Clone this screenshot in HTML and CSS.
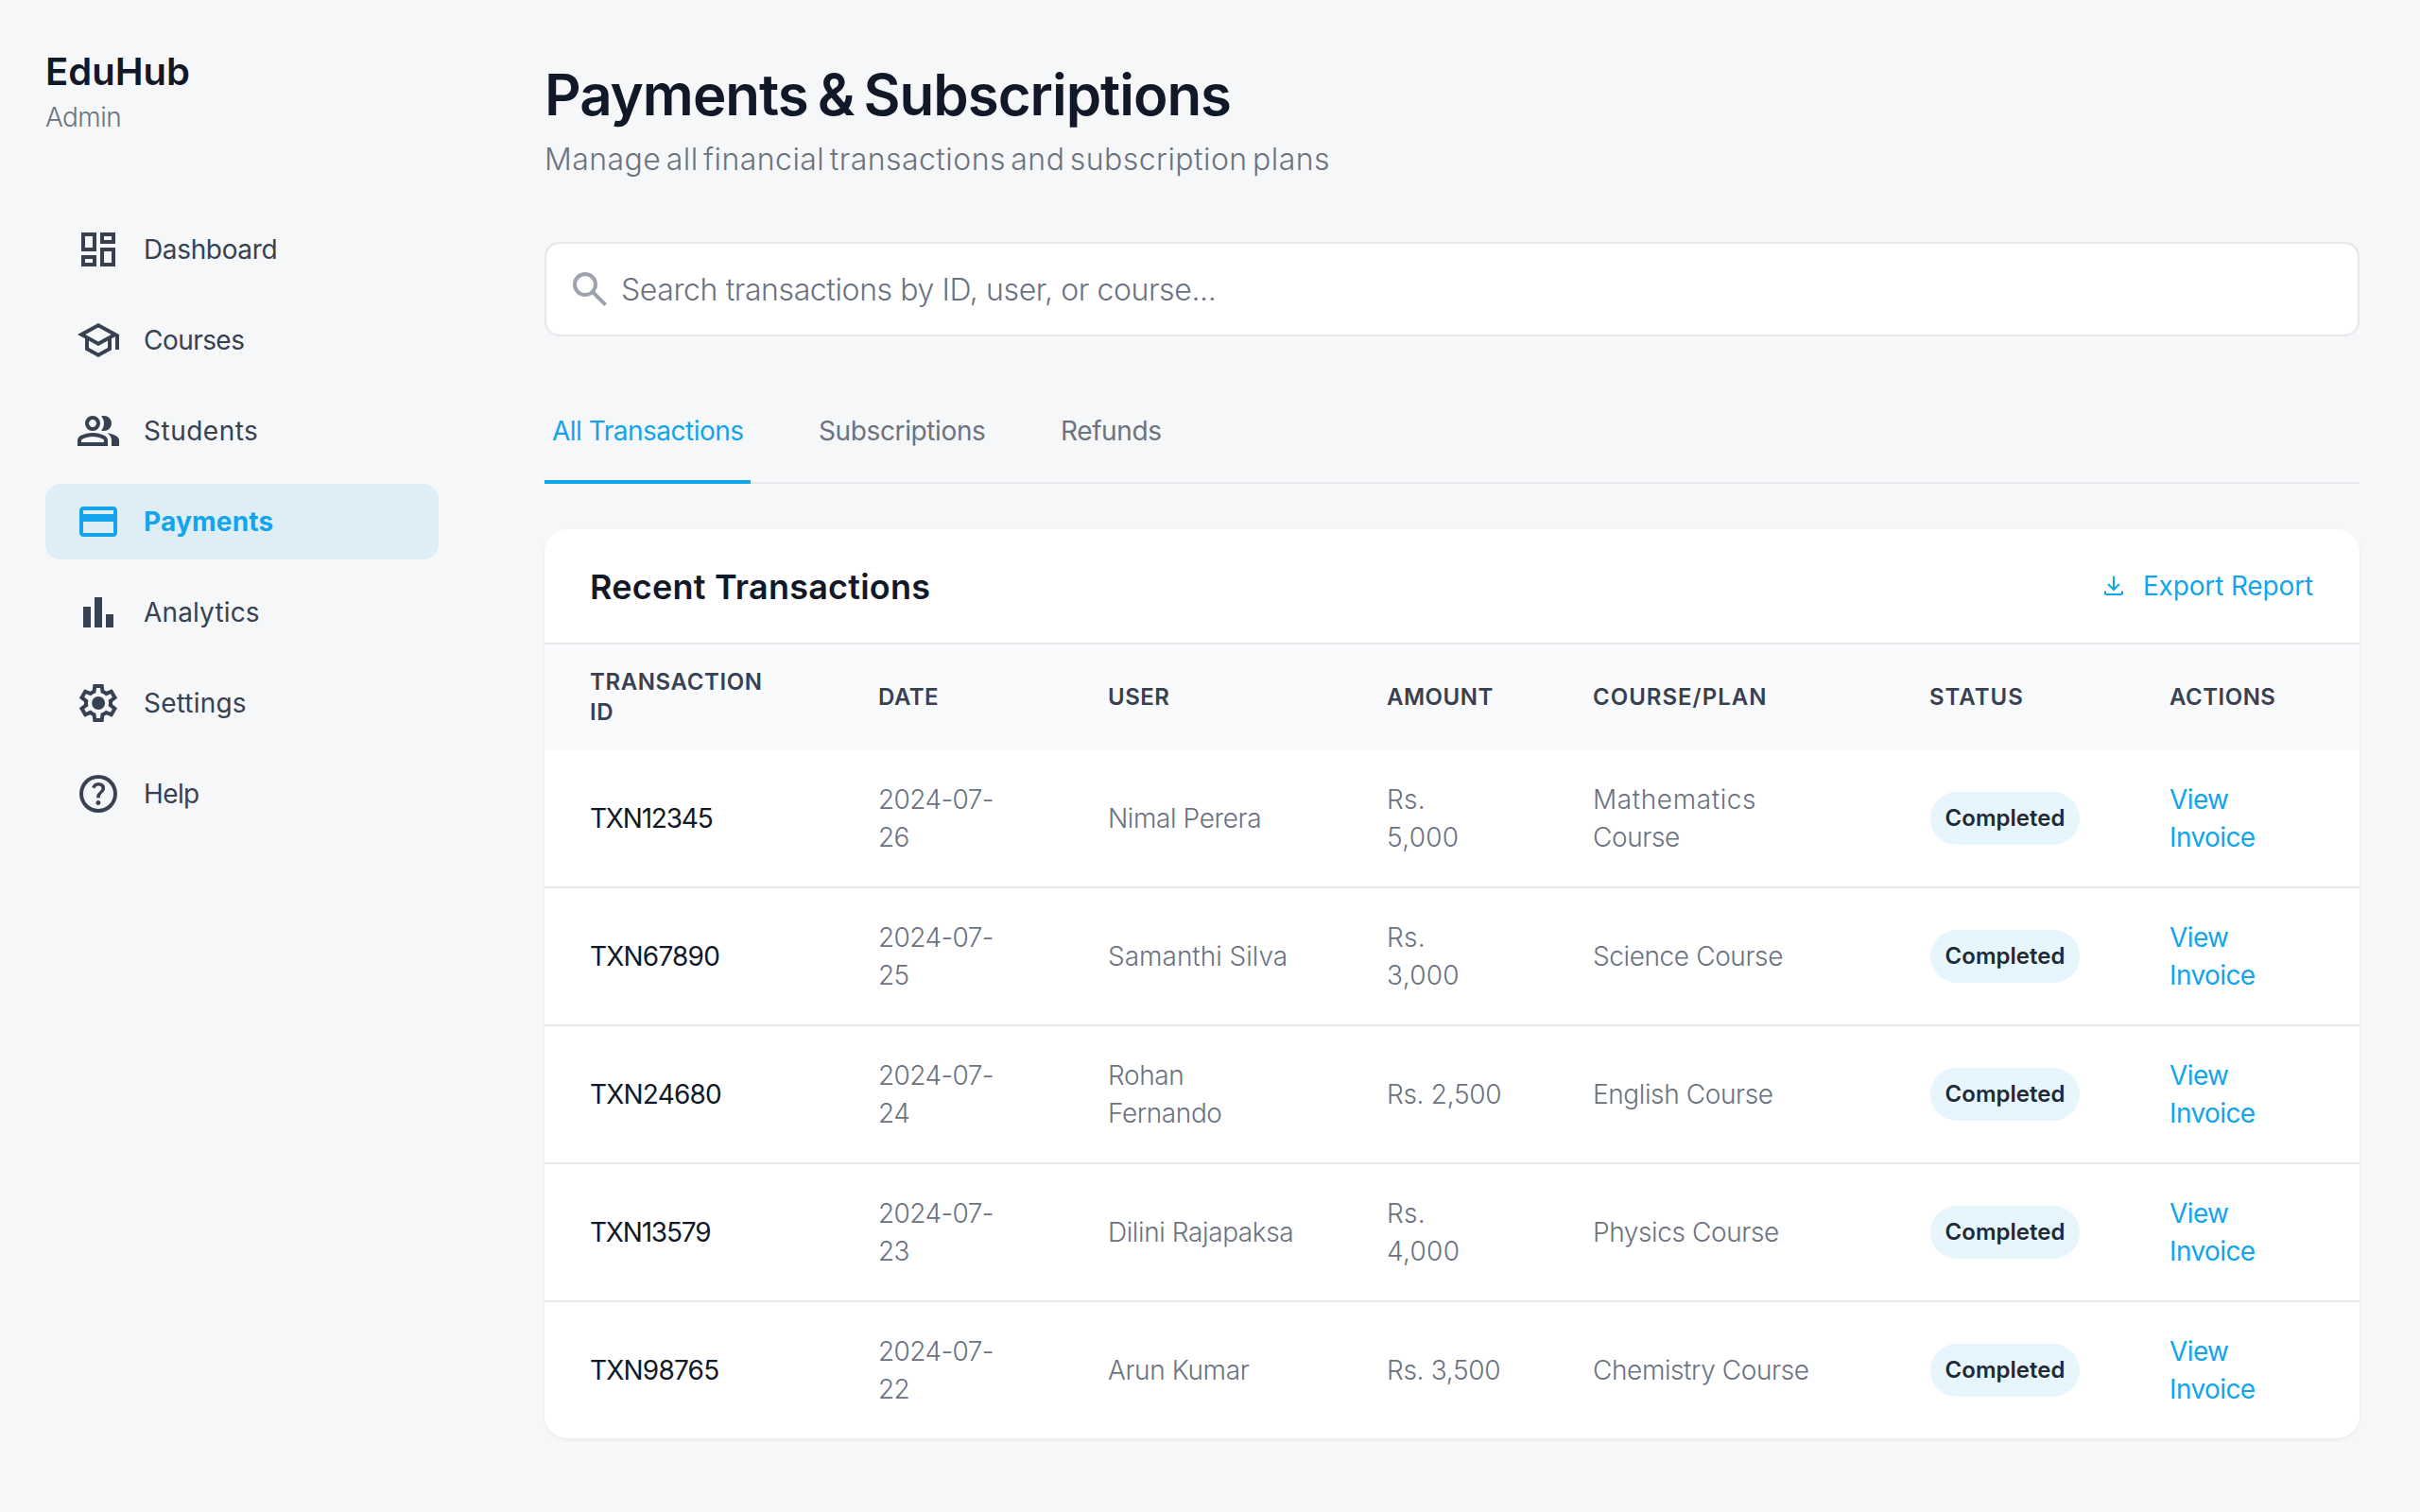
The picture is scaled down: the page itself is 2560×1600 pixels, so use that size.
FILE: index.html
```
<!DOCTYPE html>
<html lang="en">
<head>
<meta charset="utf-8">
<title>EduHub Admin - Payments</title>
<link rel="stylesheet" href="styles.css">
</head>
<body>
<div class="layout">
  <aside class="sidebar">
    <div class="brand">EduHub</div>
    <div class="role">Admin</div>
    <nav class="nav">
      <a class="nav-item dashboard"><svg class="icon" viewBox="0 0 24 24"><path d="M19 5v2h-4V5h4M9 5v6H5V5h4m10 8v6h-4v-6h4M9 17v2H5v-2h4M21 3h-8v6h8V3zM11 3H3v10h8V3zm10 8h-8v10h8V11zm-10 4H3v6h8v-6z"/></svg><span>Dashboard</span></a>
      <a class="nav-item courses"><svg class="icon" viewBox="0 0 24 24"><path d="M12 3L1 9l4 2.18v6L12 21l7-3.82v-6l2-1.09V17h2V9L12 3zm6.82 6L12 12.72 5.18 9 12 5.28 18.82 9zM17 15.99l-5 2.73-5-2.73v-3.72L12 15l5-2.73v3.72z"/></svg><span>Courses</span></a>
      <a class="nav-item students"><svg class="icon" viewBox="0 -960 960 960"><path d="M40-160v-112q0-34 17.500-62.500T104-378q62-31 126-46.500T360-440q66 0 130 15.500T616-378q29 15 46.500 43.500T680-272v112H40Zm720 0v-120q0-44-24.500-84.500T666-434q51 6 96 20.500t84 35.500q36 20 55 44.500t19 53.500v120H760ZM360-480q-66 0-113-47t-47-113q0-66 47-113t113-47q66 0 113 47t47 113q0 66-47 113t-113 47Zm400-160q0 66-47 113t-113 47q-11 0-28-2.500t-28-5.500q27-32 41.500-71t14.500-81q0-42-14.500-81T544-792q14-5 28-6.500t28-1.500q66 0 113 47t47 113ZM120-240h480v-32q0-11-5.500-20T580-306q-54-27-109-40.500T360-360q-56 0-111 13.500T140-306q-9 5-14.500 14t-5.500 20v32Zm240-320q33 0 56.500-23.500T440-640q0-33-23.500-56.500T360-720q-33 0-56.500 23.500T280-640q0 33 23.500 56.500T360-560Z"/></svg><span>Students</span></a>
      <a class="nav-item payments active"><svg class="icon" viewBox="0 0 24 24"><path d="M20 4H4c-1.110 0-1.990.890-1.990 2L2 18c0 1.110.890 2 2 2h16c1.110 0 2-.890 2-2V6c0-1.110-.890-2-2-2zm0 14H4v-6h16v6zm0-10H4V6h16v2z"/></svg><span>Payments</span></a>
      <a class="nav-item analytics"><svg class="icon" viewBox="0 0 24 24"><path d="M4 9h4v11H4zm6-5h4v16h-4zm6 9h4v7h-4z"/></svg><span>Analytics</span></a>
      <a class="nav-item settings"><svg class="icon" viewBox="0 -960 960 960"><path d="m370-80-16-128q-13-5-24.500-12T307-235l-119 50L78-375l103-78q-1-7-1-13.500v-27q0-6.500 1-13.500L78-585l110-190 119 50q11-8 23-15t24-12l16-128h220l16 128q13 5 24.500 12t22.500 15l119-50 110 190-103 78q1 7 1 13.500v27q0 6.500-2 13.500l103 78-110 190-118-50q-11 8-23 15t-24 12L590-80H370Zm70-80h79l14-106q31-8 57.500-23.500T639-327l99 41 39-68-86-65q5-14 7-29.500t2-31.500q0-16-2-31.500t-7-29.500l86-65-39-68-99 42q-22-23-48.500-38.500T533-694l-13-106h-79l-14 106q-31 8-57.500 23.500T321-633l-99-41-39 68 86 64q-5 15-7 30t-2 32q0 16 2 31t7 30l-86 65 39 68 99-42q22 23 48.500 38.500T427-266l13 106Zm42-180q58 0 99-41t41-99q0-58-41-99t-99-41q-59 0-99.500 41T342-480q0 58 40.500 99t99.500 41Z"/></svg><span>Settings</span></a>
      <a class="nav-item help"><svg class="icon" viewBox="0 -960 960 960"><path d="M478-240q21 0 35.500-14.500T528-290q0-21-14.500-35.500T478-340q-21 0-35.500 14.500T428-290q0 21 14.500 35.500T478-240Zm-36-154h74q0-33 7.500-52t42.500-52q26-26 41-49.500t15-56.500q0-56-41-86t-97-30q-57 0-92.500 30T342-618l66 26q5-18 22.500-39t53.500-21q32 0 48 17.500t16 38.500q0 20-12 37.500T506-526q-44 39-54 59t-10 73Zm38 314q-83 0-156-31.500T197-197q-54-54-85.500-127T80-480q0-83 31.500-156T197-763q54-54 127-85.500T480-880q83 0 156 31.500T763-763q54 54 85.500 127T880-480q0 83-31.500 156T763-197q-54 54-127 85.500T480-80Zm0-80q134 0 227-93t93-227q0-134-93-227t-227-93q-134 0-227 93t-93 227q0 134 93 227t227 93Z"/></svg><span>Help</span></a>
    </nav>
  </aside>
  <main class="main">
    <h1 class="title">Payments &amp; Subscriptions</h1>
    <p class="subtitle">Manage all financial transactions and subscription plans</p>
    <div class="search">
      <svg class="icon" viewBox="0 -960 960 960"><path d="M784-120 532-372q-30 24-69 38t-83 14q-109 0-184.500-75.500T120-580q0-109 75.500-184.500T380-840q109 0 184.500 75.500T640-580q0 44-14 83t-38 69l252 252-56 56ZM380-400q75 0 127.500-52.500T560-580q0-75-52.500-127.500T380-760q-75 0-127.500 52.500T200-580q0 75 52.500 127.500T380-400Z"/></svg>
      <span>Search transactions by ID, user, or course...</span>
    </div>
    <nav class="tabs">
      <a class="tab tab-all active">All Transactions</a>
      <a class="tab tab-subs">Subscriptions</a>
      <a class="tab tab-refunds">Refunds</a>
    </nav>
    <section class="card">
      <header class="card-head">
        <h2>Recent Transactions</h2>
        <a class="export"><svg class="export-icon" viewBox="0 0 20 22"><path d="M10 .8V14.500M4 9l6 6 6-6M1 16.500v2.200q0 1.300 1.300 1.300h15.400q1.300 0 1.300-1.300v-2.200"/></svg><span>Export Report</span></a>
      </header>
      <table class="table">
        <colgroup><col class="c-id"><col class="c-date"><col class="c-user"><col class="c-amount"><col class="c-course"><col class="c-status"><col class="c-actions"></colgroup>
        <thead>
          <tr><th class="h-id">Transaction ID</th><th class="h-tight">Date</th><th class="h-tight">User</th><th class="h-tight">Amount</th><th>Course/Plan</th><th>Status</th><th class="h-tight">Actions</th></tr>
        </thead>
        <tbody>
          <tr><td class="id id-narrow">TXN12345</td><td class="date">2024-07-26</td><td class="user">Nimal Perera</td><td class="amount">Rs.<br>5,000</td><td class="course"><span class="math">Mathematics</span><br>Course</td><td><span class="badge">Completed</span></td><td class="action">View Invoice</td></tr>
          <tr><td class="id">TXN67890</td><td class="date">2024-07-25</td><td>Samanthi Silva</td><td class="amount">Rs.<br>3,000</td><td class="course">Science Course</td><td><span class="badge">Completed</span></td><td class="action">View Invoice</td></tr>
          <tr><td class="id">TXN24680</td><td class="date">2024-07-24</td><td class="user">Rohan<br>Fernando</td><td class="amount-line">Rs. 2,500</td><td class="course">English Course</td><td><span class="badge">Completed</span></td><td class="action">View Invoice</td></tr>
          <tr><td class="id id-narrow">TXN13579</td><td class="date">2024-07-23</td><td class="user">Dilini Rajapaksa</td><td class="amount">Rs.<br>4,000</td><td class="course">Physics Course</td><td><span class="badge">Completed</span></td><td class="action">View Invoice</td></tr>
          <tr><td class="id">TXN98765</td><td class="date">2024-07-22</td><td class="user">Arun Kumar</td><td class="amount-line">Rs. 3,500</td><td class="course">Chemistry Course</td><td><span class="badge">Completed</span></td><td class="action">View Invoice</td></tr>
        </tbody>
      </table>
    </section>
  </main>
</div>
</body>
</html>
```
FILE: styles.css
```
* { box-sizing: border-box; }
body {
  margin: 0;
  background: #f6f7f8;
  color: #111827;
  font-family: Inter, "Noto Sans", sans-serif;
  font-size: 28px;
  line-height: 40px;
}
h1, h2, p { margin: 0; }
.layout { display: flex; min-height: 1600px; }
.icon { width: 48px; height: 48px; fill: currentColor; flex: none; }

.sidebar { width: 512px; flex: none; padding: 48px; }
.brand { font-size: 40px; line-height: 56px; font-weight: 600; }
.role { color: #6b7280; font-weight: 300; letter-spacing: -0.6px; }
.nav { display: flex; flex-direction: column; gap: 16px; margin-top: 80px; }
.nav-item {
  display: flex;
  align-items: center;
  gap: 24px;
  width: 416px;
  height: 80px;
  padding: 0 32px;
  border-radius: 16px;
  color: #374151;
}
.nav-item.active { background: rgba(19, 164, 236, 0.1); color: #13a4ec; font-weight: 700; }
.dashboard { letter-spacing: -0.35px; }
.courses { letter-spacing: -0.55px; }
.students { letter-spacing: 0.5px; }
.payments { letter-spacing: 0.2px; }
.analytics { letter-spacing: 0.15px; }
.settings { letter-spacing: 0.2px; }
.help { letter-spacing: -0.6px; }

.main { flex: 1; padding: 64px; }
.title { font-size: 60px; line-height: 72px; font-weight: 600; letter-spacing: -1.02px; word-spacing: -4px; }
.subtitle { margin-top: 9px; font-size: 32px; line-height: 48px; font-weight: 300; letter-spacing: 0.45px; word-spacing: -4px; color: #6b7280; }
.search {
  display: flex;
  align-items: center;
  gap: 9px;
  height: 100px;
  margin-top: 63px;
  padding: 0 22px;
  background: #fff;
  border: 2px solid #e5e7eb;
  border-radius: 16px;
  font-size: 32px;
  font-weight: 300;
  letter-spacing: -0.39px;
  color: #6b7280;
}
.search .icon { color: #9ca3af; }
.search span { padding-top: 2px; }

.tabs { display: flex; gap: 64px; margin-top: 48px; border-bottom: 2px solid #e5e7eb; }
.tab {
  margin-bottom: -2px;
  padding: 32px 8px;
  border-bottom: 4px solid transparent;
  color: #6b7280;
  white-space: nowrap;
}
.tab.active { color: #13a4ec; border-color: #13a4ec; }
.tab-all { width: 218px; letter-spacing: -0.5px; }
.tab-subs { width: 192px; letter-spacing: -0.38px; }
.tab-refunds { letter-spacing: -0.4px; }

.card {
  margin-top: 48px;
  background: #fff;
  border-radius: 24px;
  box-shadow: 0 2px 4px rgba(0, 0, 0, 0.05);
  overflow: hidden;
}
.card-head {
  display: flex;
  align-items: center;
  justify-content: space-between;
  height: 122px;
  padding: 0 49px 0 48px;
  border-bottom: 2px solid #e5e7eb;
}
.card-head h2 { padding-top: 2px; font-size: 36px; line-height: 48px; font-weight: 600; letter-spacing: 0.22px; }
.export { display: flex; align-items: center; gap: 21px; color: #13a4ec; letter-spacing: -0.15px; }
.export-icon { width: 20px; height: 22px; fill: none; stroke: currentColor; stroke-width: 2; }

.table { width: 100%; border-collapse: separate; border-spacing: 0; table-layout: fixed; }
.c-id { width: 305px; }
.c-date { width: 243px; }
.c-user { width: 295px; }
.c-amount { width: 218px; }
.c-course { width: 356px; }
.c-status { width: 254px; }
.c-actions { width: 249px; }
th {
  padding: 24px 0 24px 48px;
  background: #f9fafb;
  color: #374151;
  font-size: 24px;
  line-height: 32px;
  font-weight: 600;
  letter-spacing: 1px;
  text-align: left;
  text-transform: uppercase;
}
.h-id { padding-right: 48px; letter-spacing: 0.6px; }
.h-tight { letter-spacing: 0.5px; }
td { padding: 32px 0 32px 48px; font-weight: 300; color: #6b7280; }
tbody tr:not(:last-child) td { border-bottom: 2px solid #e5e7eb; }
.id { font-weight: 400; color: #111827; letter-spacing: -0.8px; }
.id-narrow { letter-spacing: -1.2px; }
.date { padding-right: 48px; letter-spacing: -0.6px; }
.user { letter-spacing: -0.4px; }
.amount { letter-spacing: 0.3px; }
.amount-line { letter-spacing: -0.3px; }
.course { letter-spacing: -0.4px; }
.math { letter-spacing: 0.6px; }
.action { padding-right: 48px; font-weight: 400; color: #13a4ec; letter-spacing: -0.6px; }
.badge {
  display: flex;
  align-items: center;
  justify-content: center;
  width: 158px;
  height: 56px;
  margin-left: 1px;
  border-radius: 28px;
  background: #e7f6fd;
  color: #1f2937;
  font-size: 24px;
  font-weight: 600;
}
```
